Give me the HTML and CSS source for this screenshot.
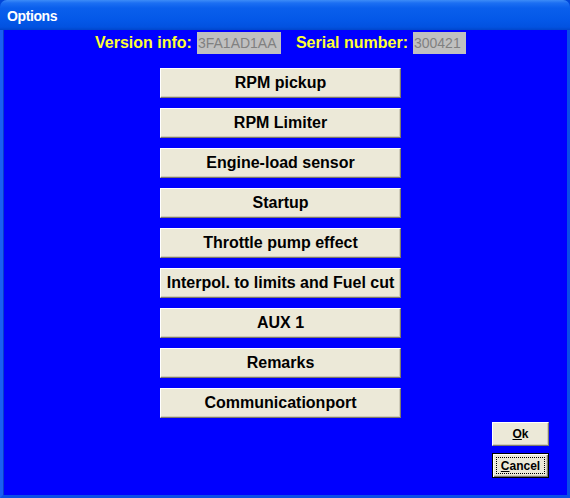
FILE: index.html
```html
<!DOCTYPE html>
<html>
<head>
<meta charset="utf-8">
<link rel="stylesheet" href="styles.css">
</head>
<body>
<div class="window">
  <div class="titlebar"><span class="title">Options</span></div>
  <div class="client">
    <div class="main">
      <div class="info">
        <span class="label">Version info:</span>
        <span class="field field-version">3FA1AD1AA</span>
        <span class="label label-serial">Serial number:</span>
        <span class="field field-serial">300421</span>
      </div>
      <div class="buttons">
        <button class="btn">RPM pickup</button>
        <button class="btn">RPM Limiter</button>
        <button class="btn">Engine-load sensor</button>
        <button class="btn">Startup</button>
        <button class="btn">Throttle pump effect</button>
        <button class="btn">Interpol. to limits and Fuel cut</button>
        <button class="btn">AUX 1</button>
        <button class="btn">Remarks</button>
        <button class="btn">Communicationport</button>
      </div>
    </div>
    <div class="footer">
      <button class="small"><span class="u">O</span>k</button>
      <button class="small default"><span class="focus"><span class="u">C</span>ancel</span></button>
    </div>
  </div>
</div>
</body>
</html>
```

FILE: styles.css
```css
html, body {
  margin: 0;
  padding: 0;
  background: #0000ff;
}
.window {
  width: 570px;
  height: 498px;
  display: flex;
  flex-direction: column;
  font-family: "Liberation Sans", Arial, sans-serif;
  background: #0045d8;
}
.titlebar {
  height: 30px;
  flex: none;
  display: flex;
  align-items: center;
  padding-left: 7px;
  border-radius: 7px 7px 0 0;
  background: linear-gradient(to bottom, #3d8cf7 0px, #1c6ff3 3px, #0a5fec 8px, #0458e8 20px, #0252e0 27px, #0046cc 30px);
}
.title {
  color: #ffffff;
  font-weight: bold;
  font-size: 14px;
  letter-spacing: -0.4px;
  margin-top: 2px;
}
.client {
  flex: 1;
  display: flex;
  flex-direction: column;
  background: #0000ff;
  border-left: 3px solid #1a5ff2;
  border-right: 3px solid #0a4ee6;
  border-bottom: 3px solid #0a4ee6;
  box-shadow: inset 1px 0 0 #0a3ecc;
}
.main {
  display: flex;
  flex-direction: column;
  align-items: center;
  padding-right: 9px;
  padding-top: 2px;
}
.info {
  display: flex;
  align-items: center;
  height: 22px;
}
.label {
  color: #ffff33;
  font-weight: bold;
  font-size: 16px;
  margin-right: 5px;
}
.label-serial {
  margin-left: 15px;
}
.field {
  height: 22px;
  line-height: 22px;
  background: #c0c0c0;
  color: #808080;
  font-size: 14px;
  padding-left: 1px;
  overflow: hidden;
  white-space: nowrap;
  box-sizing: border-box;
}
.field-version {
  width: 84px;
}
.field-serial {
  width: 53px;
}
.buttons {
  display: flex;
  flex-direction: column;
  gap: 10px;
  margin-top: 14px;
}
.btn {
  width: 241px;
  height: 30px;
  margin: 0;
  padding: 0;
  background: #ece9d8;
  border: 1px solid;
  border-color: #ffffff #7d7a6e #7d7a6e #ffffff;
  box-shadow: inset -1px -1px 0 #cfcbba;
  font-family: "Liberation Sans", Arial, sans-serif;
  font-weight: bold;
  font-size: 16px;
  color: #000000;
}
.footer {
  display: flex;
  flex-direction: column;
  align-items: flex-end;
  gap: 7px;
  margin-top: 4px;
  padding-right: 18px;
}
.small {
  width: 57px;
  height: 24px;
  margin: 0;
  padding: 0;
  background: #ece9d8;
  border: 1px solid;
  border-color: #ffffff #7d7a6e #7d7a6e #ffffff;
  box-shadow: inset -1px -1px 0 #cfcbba;
  font-family: "Liberation Sans", Arial, sans-serif;
  font-weight: bold;
  font-size: 12px;
  color: #000000;
}
.small.default {
  height: 25px;
  border: 1px solid #000000;
  box-shadow: inset 1px 1px 0 #ffffff, inset -1px -1px 0 #7d7a6e, inset -2px -2px 0 #cfcbba;
  display: flex;
  align-items: stretch;
  justify-content: stretch;
  padding: 3px;
}
.focus {
  flex: 1;
  border: 1px dotted #000000;
  display: flex;
  align-items: center;
  justify-content: center;
}
.u {
  text-decoration: underline;
}
```
